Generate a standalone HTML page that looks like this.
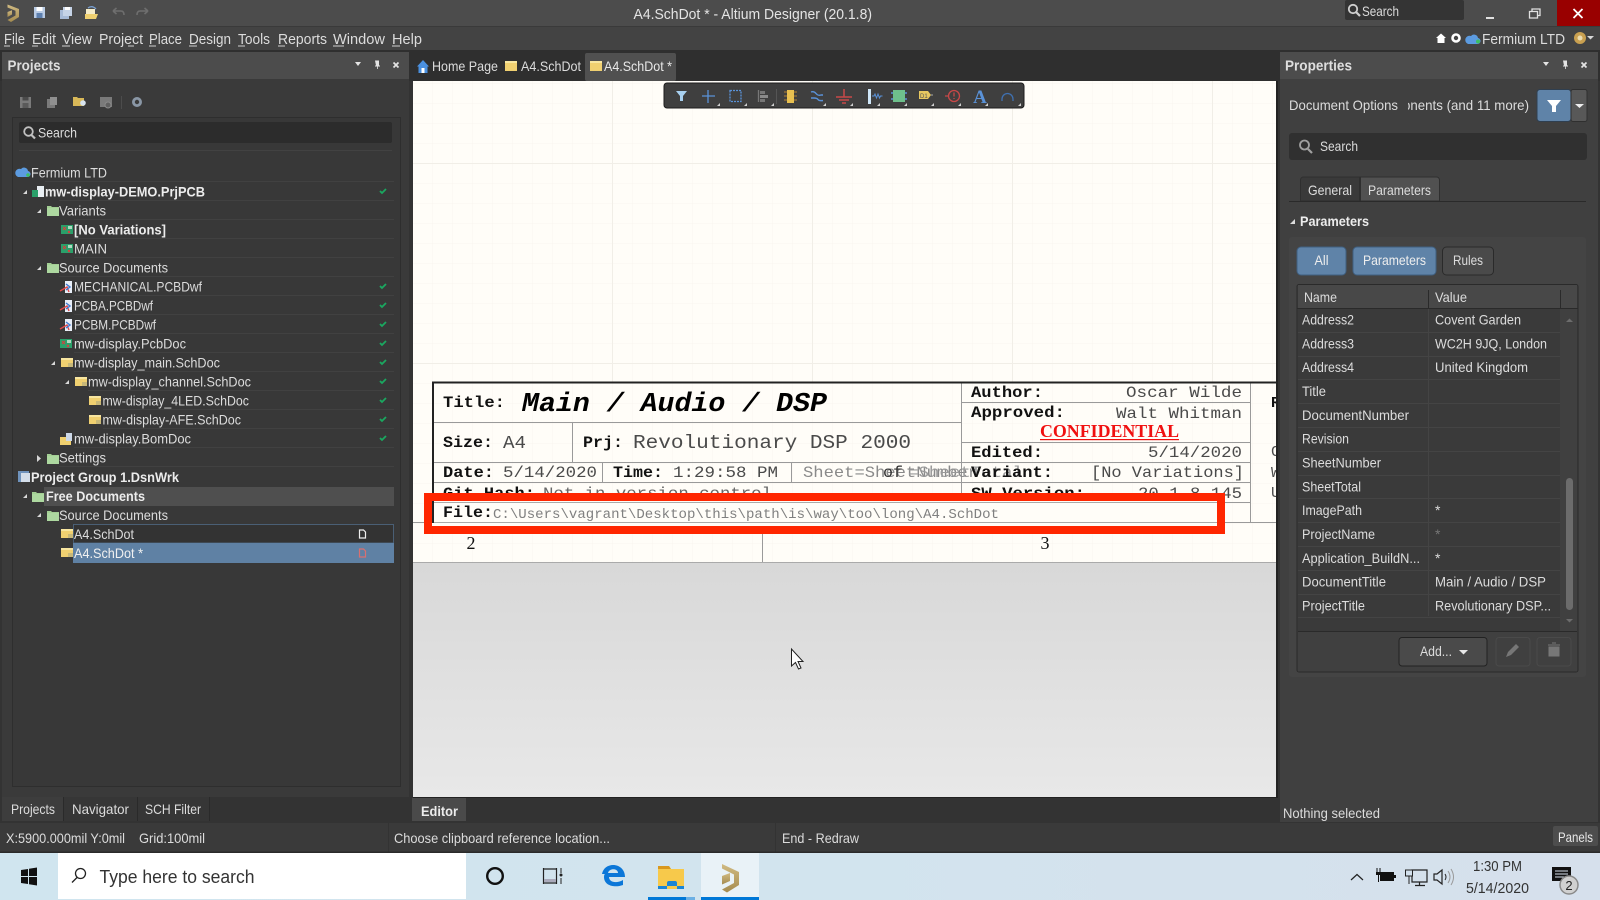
<!DOCTYPE html>
<html><head><meta charset="utf-8"><title>A4.SchDot</title>
<style>
html,body{margin:0;padding:0;background:#333;width:1600px;height:900px;overflow:hidden}
svg{display:block}
text{font-family:"Liberation Sans",sans-serif;font-size:14px;fill:#dcdcdc;white-space:pre}
.b{font-weight:bold;fill:#ececec}
.m{font-family:"Liberation Mono",monospace;fill:#4a4a4a}
.mb{font-family:"Liberation Mono",monospace;font-weight:bold;fill:#111}
</style></head><body>
<svg xmlns="http://www.w3.org/2000/svg" width="1600" height="900" viewBox="0 0 1600 900">
<defs>
<linearGradient id="cg" x1="0" y1="0" x2="0" y2="1"><stop offset="0" stop-color="#d8d8d8"/><stop offset="1" stop-color="#e8e8e8"/></linearGradient>
<linearGradient id="tb" x1="0" y1="0" x2="1" y2="0"><stop offset="0" stop-color="#d0e5ef"/><stop offset="0.5" stop-color="#d2e4ee"/><stop offset="1" stop-color="#d6e0ec"/></linearGradient>
<linearGradient id="gold" x1="0" y1="0" x2="0" y2="1"><stop offset="0" stop-color="#d0ba82"/><stop offset="1" stop-color="#a58c50"/></linearGradient>
<pattern id="grid" width="20" height="20" patternUnits="userSpaceOnUse" x="412" y="103"><path d="M20 0H0V20" fill="none" stroke="#f8f5ef" stroke-width="1"/></pattern>
<g id="fold"><path d="M0 1h4l1 1h7v9H0z" fill="#a3cf94"/><path d="M0 3h12v8H0z" fill="#add8a0"/></g>
<g id="sch"><rect x="0" y="0" width="12" height="9" fill="#f0d070"/><rect x="0" y="0" width="12" height="2" fill="#f8e6a0"/><rect x="7" y="5" width="5" height="4" fill="#c8b878"/></g>
<g id="pcb"><rect x="0" y="0" width="12" height="9" fill="#2aa06a"/><rect x="7" y="1" width="4" height="3" fill="#b0d8c0"/><path d="M2 2l3 3M5 2l-3 3M7 6l2 2M9 6l-2 2" stroke="#d84040" stroke-width="1"/></g>
<g id="dwf"><path d="M5 0h7v12H5z" fill="#e8eef8"/><path d="M0 10l7-4 2 5" fill="none" stroke="#e04848" stroke-width="1.400"/><path d="M6 3l4 3-4 3" fill="none" stroke="#3f78d0" stroke-width="1.400"/></g>
<path id="ck" d="M0 3l2 2 4-4" fill="none" stroke="#1aa860" stroke-width="1.800"/>
<path id="tri" d="M0 4L4 0V4z" fill="#d8d8d8"/>
<g id="corner"><path d="M0 3L3 0V3z" fill="#cfcfcf"/></g>
</defs>

<!-- chrome background -->
<rect width="1600" height="900" fill="#333"/>
<rect width="1600" height="26" fill="#4c4c4c"/>
<rect y="26" width="1600" height="1" fill="#3a3a3a"/>
<rect y="27" width="1600" height="23" fill="#434343"/>
<rect y="50" width="1600" height="31" fill="#2f2f2f"/>

<!-- title bar -->
<path d="M7.500 4.500L19 9V17L11 22L7.500 20L15.500 15.500V10.800L7.500 7.500z" fill="url(#gold)"/><path d="M7.500 12L12 10.300V14.500L7.500 17z" fill="url(#gold)"/>
<g><rect x="34" y="7" width="11" height="11" fill="#b9cbe4"/><rect x="36.500" y="7" width="6" height="4" fill="#fff"/><rect x="36.500" y="13" width="6" height="5" fill="#5d7fae"/></g>
<g><rect x="60" y="10" width="9" height="9" fill="#a7bbd8"/><rect x="63" y="7" width="9" height="9" fill="#c6d4e8"/><rect x="65" y="7" width="5" height="3" fill="#fff"/></g>
<g><path d="M85 14h13l-2 5H85z" fill="#efd070"/><path d="M86 9h9v5h-9z" fill="#f5ecc8"/><path d="M88 8q4-3 8 1" fill="none" stroke="#7aa0d0" stroke-width="1.300"/></g>
<path d="M113 11h8q3 0 3 4M113 11l3.500-3M113 11l3.500 3" fill="none" stroke="#6e6e6e" stroke-width="1.600"/>
<path d="M148 11h-8q-3 0-3 4M148 11l-3.500-3M148 11l-3.500 3" fill="none" stroke="#6e6e6e" stroke-width="1.600"/>
<text x="633.500" y="19" textLength="238.500" lengthAdjust="spacingAndGlyphs" style="font-size:15px;fill:#e4e4e4">A4.SchDot * - Altium Designer (20.1.8)</text>
<rect x="1345" y="0" width="119" height="20" rx="2" fill="#343434"/>
<circle cx="1353" cy="9" r="4.200" fill="none" stroke="#cfcfcf" stroke-width="1.800"/><path d="M1356 12l4 4" stroke="#cfcfcf" stroke-width="2.200"/>
<text x="1362" y="16" textLength="37" lengthAdjust="spacingAndGlyphs">Search</text>
<rect x="1486" y="17" width="8" height="2" fill="#e0e0e0"/>
<path d="M1529.500 11.500h8v6.500h-8zM1532 11.500V9h8v6.500h-2.500" fill="none" stroke="#e0e0e0" stroke-width="1.300"/>
<rect x="1557" y="0" width="43" height="26" fill="#990000"/>
<path d="M1573.500 9l9 9M1582.500 9l-9 9" stroke="#fff" stroke-width="1.800"/>

<!-- menu -->
<text x="4" y="44" textLength="21" lengthAdjust="spacingAndGlyphs" style="font-size:15px">File</text>
<text x="32" y="44" textLength="24" lengthAdjust="spacingAndGlyphs" style="font-size:15px">Edit</text>
<text x="62" y="44" textLength="30" lengthAdjust="spacingAndGlyphs" style="font-size:15px">View</text>
<text x="99" y="44" textLength="44" lengthAdjust="spacingAndGlyphs" style="font-size:15px">Project</text>
<text x="149" y="44" textLength="33" lengthAdjust="spacingAndGlyphs" style="font-size:15px">Place</text>
<text x="189" y="44" textLength="42" lengthAdjust="spacingAndGlyphs" style="font-size:15px">Design</text>
<text x="238" y="44" textLength="32" lengthAdjust="spacingAndGlyphs" style="font-size:15px">Tools</text>
<text x="278" y="44" textLength="49" lengthAdjust="spacingAndGlyphs" style="font-size:15px">Reports</text>
<text x="333" y="44" textLength="52" lengthAdjust="spacingAndGlyphs" style="font-size:15px">Window</text>
<text x="392" y="44" textLength="30" lengthAdjust="spacingAndGlyphs" style="font-size:15px">Help</text>
<path d="M4 46h6M32 46h6M62 46h8M128 46h6M149 46h7M189 46h8M238 46h7M278 46h7M333 46h11M392 46h8" stroke="#cfcfcf" stroke-width="1"/>
<path d="M1436 38l5-4.500 5 4.500h-1.500v5h-7v-5z" fill="#fff"/>
<circle cx="1456" cy="38" r="3.500" fill="none" stroke="#fff" stroke-width="2.600"/>
<path d="M1468 44h9a3 3 0 0 0 1-6 4 4 0 0 0-7-2 4 4 0 0 0-3 8z" fill="#5c9be0"/><circle cx="1478" cy="41.500" r="2" fill="#3cc060"/>
<text x="1482" y="44" textLength="83" lengthAdjust="spacingAndGlyphs" style="font-size:15px">Fermium LTD</text>
<circle cx="1580" cy="38" r="6" fill="#c9a050"/><circle cx="1580" cy="38" r="2.500" fill="#ecdcb0"/>
<path d="M1587 36h7l-3.500 3.500z" fill="#d8d8d8"/>

<!-- left panel -->
<rect x="2" y="52" width="407" height="745" fill="#3a3a3a"/>
<rect x="2" y="52" width="407" height="27" fill="#4c4c4c"/>
<text class="b" x="7.500" y="70.500" textLength="53" lengthAdjust="spacingAndGlyphs" style="font-size:14.500px;fill:#dedede">Projects</text>
<path d="M355 62h6l-3 4z" fill="#e4e4e4"/>
<path d="M375 60.500h4v5h1v1h-2v2.500h-.8v-2.500H375v-1h1z" fill="#e4e4e4"/>
<path d="M393.500 62.500l5 5M398.500 62.500l-5 5" stroke="#e4e4e4" stroke-width="1.700"/>
<g fill="#7a7a7a"><rect x="20" y="97" width="11" height="11"/><rect x="47" y="99" width="8" height="9"/><rect x="50" y="97" width="7" height="8" fill="#909090"/><rect x="100" y="97" width="12" height="10"/></g>
<rect x="22.500" y="97" width="6" height="3.500" fill="#4a4a4a"/><rect x="22.500" y="103" width="6" height="5" fill="#5a5a5a"/>
<path d="M73 97h4l1 1h6v8H73z" fill="#d8b858"/><circle cx="83" cy="103" r="2.800" fill="#d8e4f0"/>
<circle cx="108" cy="105" r="3" fill="#606060" stroke="#8a8a8a"/>
<rect x="121" y="96" width="1" height="13" fill="#4c4c4c"/>
<circle cx="137" cy="102" r="3.600" fill="none" stroke="#8a97a6" stroke-width="2.800"/>
<rect x="12.500" y="117.500" width="388" height="669" fill="#383838" stroke="#2e2e2e"/>
<rect x="19" y="122" width="373" height="21" rx="2" fill="#2c2c2c"/>
<circle cx="28.500" cy="131.500" r="4.300" fill="none" stroke="#c0c0c0" stroke-width="1.800"/><path d="M31.500 135l3.500 3.500" stroke="#c0c0c0" stroke-width="2.200"/>
<text x="38" y="137.500" textLength="39" lengthAdjust="spacingAndGlyphs">Search</text>
<rect x="19" y="150" width="373" height="1" fill="#424242"/>

<!-- row separators -->
<path d="M45 181.500H394M59 200.500H394M74 219.500H394M74 238.500H394M74 257.500H394M59 276.500H394M74 295.500H394M74 314.500H394M74 333.500H394M74 352.500H394M74 371.500H394M88 390.500H394M103 409.500H394M103 428.500H394M74 447.500H394M59 466.500H394" stroke="#414141" stroke-width="1" fill="none"/>

<rect x="44" y="487" width="350" height="19" fill="#4f4f4f"/>
<rect x="73.500" y="524.500" width="320" height="18.500" fill="#333" stroke="#4a5f75"/>
<rect x="73" y="543" width="321" height="20" fill="#5f81a4"/>

<!-- tree icons -->
<path d="M18 177h9a3 3 0 0 0 1-6 4 4 0 0 0-7-2 4 4 0 0 0-3 8z" fill="#5c9be0"/><circle cx="28" cy="175" r="1.800" fill="#3cc060"/>
<use href="#tri" x="23" y="190"/>
<rect x="37" y="186" width="7" height="11" fill="#e8eef2"/><rect x="32" y="190" width="6" height="7" fill="#2aa06a"/>
<use href="#tri" x="37" y="209"/><use href="#fold" x="47" y="205"/>
<use href="#pcb" x="61" y="225"/><use href="#pcb" x="61" y="244"/>
<use href="#tri" x="37" y="266"/><use href="#fold" x="47" y="262"/>
<use href="#dwf" x="60" y="281"/><use href="#dwf" x="60" y="300"/><use href="#dwf" x="60" y="319"/>
<use href="#pcb" x="60" y="339"/>
<use href="#tri" x="51" y="361"/><use href="#sch" x="61" y="358"/>
<use href="#tri" x="65" y="380"/><use href="#sch" x="75" y="377"/>
<use href="#sch" x="89" y="396"/><use href="#sch" x="89" y="415"/>
<rect x="60" y="437" width="11" height="8" fill="#f0d070"/><rect x="66" y="433" width="6" height="8" fill="#ccd8e8"/>
<path d="M37 455l4 3.500-4 3.500z" fill="#d8d8d8"/><use href="#fold" x="47" y="453"/>
<rect x="18" y="471" width="11" height="11" fill="#6f93bd"/><rect x="21" y="473" width="9" height="9" fill="#d4deea"/>
<use href="#tri" x="23" y="494"/><use href="#fold" x="32" y="491"/>
<use href="#tri" x="37" y="513"/><use href="#fold" x="47" y="510"/>
<use href="#sch" x="61" y="529"/><use href="#sch" x="61" y="548"/>
<path d="M359.500 530h4l2 2v6h-6z" fill="none" stroke="#eee" stroke-width="1.200"/>
<path d="M359.500 549h4l2 2v6h-6z" fill="none" stroke="#d87070" stroke-width="1.200"/>
<use href="#ck" x="380" y="188"/><use href="#ck" x="380" y="283"/><use href="#ck" x="380" y="302"/><use href="#ck" x="380" y="321"/><use href="#ck" x="380" y="340"/><use href="#ck" x="380" y="359"/><use href="#ck" x="380" y="378"/><use href="#ck" x="380" y="397"/><use href="#ck" x="380" y="416"/><use href="#ck" x="380" y="435"/>

<!-- tree text -->
<text x="31" y="177.500" textLength="76" lengthAdjust="spacingAndGlyphs">Fermium LTD</text>
<text class="b" x="45" y="196.500" textLength="160" lengthAdjust="spacingAndGlyphs">mw-display-DEMO.PrjPCB</text>
<text x="59" y="215.500" textLength="47" lengthAdjust="spacingAndGlyphs">Variants</text>
<text class="b" x="74" y="234.500" textLength="92" lengthAdjust="spacingAndGlyphs">[No Variations]</text>
<text x="74" y="253.500" textLength="33" lengthAdjust="spacingAndGlyphs">MAIN</text>
<text x="59" y="272.500" textLength="109" lengthAdjust="spacingAndGlyphs">Source Documents</text>
<text x="74" y="291.500" textLength="128" lengthAdjust="spacingAndGlyphs">MECHANICAL.PCBDwf</text>
<text x="74" y="310.500" textLength="79" lengthAdjust="spacingAndGlyphs">PCBA.PCBDwf</text>
<text x="74" y="329.500" textLength="82" lengthAdjust="spacingAndGlyphs">PCBM.PCBDwf</text>
<text x="74" y="348.500" textLength="112" lengthAdjust="spacingAndGlyphs">mw-display.PcbDoc</text>
<text x="74" y="367.500" textLength="146" lengthAdjust="spacingAndGlyphs">mw-display_main.SchDoc</text>
<text x="88" y="386.500" textLength="163" lengthAdjust="spacingAndGlyphs">mw-display_channel.SchDoc</text>
<text x="102.500" y="405.500" textLength="146.500" lengthAdjust="spacingAndGlyphs">mw-display_4LED.SchDoc</text>
<text x="102.500" y="424.500" textLength="138.500" lengthAdjust="spacingAndGlyphs">mw-display-AFE.SchDoc</text>
<text x="74" y="443.500" textLength="117" lengthAdjust="spacingAndGlyphs">mw-display.BomDoc</text>
<text x="59" y="462.500" textLength="47" lengthAdjust="spacingAndGlyphs">Settings</text>
<text class="b" x="31" y="482" textLength="148" lengthAdjust="spacingAndGlyphs">Project Group 1.DsnWrk</text>
<text class="b" x="46" y="501" textLength="99" lengthAdjust="spacingAndGlyphs">Free Documents</text>
<text x="59" y="520" textLength="109" lengthAdjust="spacingAndGlyphs">Source Documents</text>
<text x="74" y="539" textLength="60" lengthAdjust="spacingAndGlyphs">A4.SchDot</text>
<text x="74" y="558" textLength="69" lengthAdjust="spacingAndGlyphs" style="fill:#f0f0f0">A4.SchDot *</text>

<!-- panel tabs -->
<rect x="2" y="797" width="61" height="24" fill="#3d3d3d"/>
<rect x="63" y="797" width="74" height="24" fill="#363636"/>
<rect x="137" y="797" width="72" height="24" fill="#363636"/>
<path d="M63.500 797v24M137.500 797v24M209.500 797v24" stroke="#2a2a2a"/>
<text x="11" y="814" textLength="44" lengthAdjust="spacingAndGlyphs">Projects</text>
<text x="72" y="814" textLength="57" lengthAdjust="spacingAndGlyphs">Navigator</text>
<text x="145" y="814" textLength="56" lengthAdjust="spacingAndGlyphs">SCH Filter</text>

<!-- document tabs -->
<path d="M417 66.500l6-6.500 6 6.500h-1.500v6.500h-9v-6.500z" fill="#4a90e0"/><rect x="421.500" y="68" width="3" height="5" fill="#fff"/>
<text x="432" y="71" textLength="66" lengthAdjust="spacingAndGlyphs">Home Page</text>
<rect x="505" y="61" width="12" height="10" fill="#f0d070"/><rect x="505" y="61" width="12" height="2" fill="#f8e6a0"/>
<text x="521" y="71" textLength="60" lengthAdjust="spacingAndGlyphs">A4.SchDot</text>
<rect x="585" y="53" width="91" height="28" rx="2" fill="#505050"/>
<rect x="590" y="61" width="12" height="10" fill="#f0d070"/><rect x="590" y="61" width="12" height="2" fill="#f8e6a0"/>
<text x="604" y="71" textLength="68" lengthAdjust="spacingAndGlyphs" style="fill:#e8e8e8">A4.SchDot *</text>

<!-- canvas -->
<clipPath id="cv"><rect x="413" y="81" width="863" height="716"/></clipPath>
<g clip-path="url(#cv)">
<rect x="412" y="81" width="864" height="482" fill="#fffdf8"/>
<rect x="412" y="81" width="864" height="482" fill="url(#grid)"/>
<path d="M612.500 81V382M812.500 81V382M1012.500 81V382M1212.500 81V382M412 163.500H1276M412 363.500H1276" stroke="#f1eee7" stroke-width="1" fill="none"/>
<rect x="412" y="563" width="864" height="234" fill="url(#cg)"/>
<rect x="412" y="562" width="864" height="1" fill="#aaa"/>

<!-- title block lines -->
<path d="M433 422.500H962M433 462.500H1250M433 482.500H1250M962 402.500H1250M962 442.500H1250M962 502.500H1250M412 522.500H1276M572.500 422V462M602.500 462V482M791.500 462V482M961.500 382V522M1250.500 382V522M762.500 522V562" stroke="#9a9a9a" stroke-width="1" fill="none"/>
<rect x="432" y="381.500" width="844" height="2" fill="#222"/>
<rect x="432" y="381.500" width="2" height="141" fill="#222"/>

<text class="mb" x="443" y="407" textLength="62" lengthAdjust="spacingAndGlyphs" style="font-size:16px">Title:</text>
<text class="mb" x="522" y="411" textLength="305" lengthAdjust="spacingAndGlyphs" style="font-size:27px;font-style:italic;fill:#000">Main / Audio / DSP</text>
<text class="mb" x="443" y="447" textLength="50" lengthAdjust="spacingAndGlyphs" style="font-size:16px">Size:</text>
<text class="m" x="503" y="448" textLength="23" lengthAdjust="spacingAndGlyphs" style="font-size:18px">A4</text>
<text class="mb" x="583" y="447" textLength="40" lengthAdjust="spacingAndGlyphs" style="font-size:16px">Prj:</text>
<text class="m" x="633" y="448" textLength="278" lengthAdjust="spacingAndGlyphs" style="font-size:19px">Revolutionary DSP 2000</text>
<text class="mb" x="443" y="477" textLength="51" lengthAdjust="spacingAndGlyphs" style="font-size:16px">Date:</text>
<text class="m" x="503" y="477" textLength="94" lengthAdjust="spacingAndGlyphs" style="font-size:16px">5/14/2020</text>
<text class="mb" x="613" y="477" textLength="50" lengthAdjust="spacingAndGlyphs" style="font-size:16px">Time:</text>
<text class="m" x="673" y="477" textLength="105" lengthAdjust="spacingAndGlyphs" style="font-size:16px">1:29:58 PM</text>
<text class="m" x="803" y="477" textLength="175" lengthAdjust="spacingAndGlyphs" style="font-size:16px;fill:#8a8a8a">Sheet=SheetNumber</text>
<text class="mb" x="883" y="477" textLength="20" lengthAdjust="spacingAndGlyphs" style="font-size:16px;font-weight:normal;fill:#333">of</text>
<text class="m" x="908" y="477" textLength="115" lengthAdjust="spacingAndGlyphs" style="font-size:16px;fill:#9a9a9a">=SheetTotal</text>
<text class="mb" x="443" y="498" textLength="92" lengthAdjust="spacingAndGlyphs" style="font-size:16px">Git Hash:</text>
<text class="m" x="543" y="498" textLength="229" lengthAdjust="spacingAndGlyphs" style="font-size:16px;fill:#666">Not in version control</text>

<text class="mb" x="971" y="397" textLength="72" lengthAdjust="spacingAndGlyphs" style="font-size:16px">Author:</text>
<text class="m" x="1126" y="397" textLength="116" lengthAdjust="spacingAndGlyphs" style="font-size:16px">Oscar Wilde</text>
<text class="mb" x="971" y="417" textLength="94" lengthAdjust="spacingAndGlyphs" style="font-size:16px">Approved:</text>
<text class="m" x="1116" y="418" textLength="126" lengthAdjust="spacingAndGlyphs" style="font-size:16px">Walt Whitman</text>
<text x="1040" y="437" textLength="139" lengthAdjust="spacingAndGlyphs" style="font-family:'Liberation Serif',serif;font-weight:bold;font-size:18px;fill:#f01010">CONFIDENTIAL</text>
<rect x="1040" y="439" width="139" height="1.200" fill="#f01010"/>
<text class="mb" x="971" y="457" textLength="72" lengthAdjust="spacingAndGlyphs" style="font-size:16px">Edited:</text>
<text class="m" x="1148" y="457" textLength="94" lengthAdjust="spacingAndGlyphs" style="font-size:16px">5/14/2020</text>
<text class="mb" x="971" y="477" textLength="82" lengthAdjust="spacingAndGlyphs" style="font-size:16px">Variant:</text>
<text class="m" x="1091" y="477" textLength="153" lengthAdjust="spacingAndGlyphs" style="font-size:16px">[No Variations]</text>
<text class="mb" x="971" y="498" textLength="114" lengthAdjust="spacingAndGlyphs" style="font-size:16px">SW Version:</text>
<text class="m" x="1138" y="498" textLength="104" lengthAdjust="spacingAndGlyphs" style="font-size:16px">20.1.8.145</text>
<text class="mb" x="1271" y="407" style="font-size:15px">R</text>
<text class="m" x="1271" y="456" style="font-size:15px">C</text>
<text class="m" x="1271" y="477" style="font-size:15px">W</text>
<text class="m" x="1271" y="497" style="font-size:15px">U</text>

<!-- red highlight -->
<rect x="428" y="497" width="793" height="33" fill="#fffdf8" stroke="#ff2600" stroke-width="8"/>
<rect x="432" y="502" width="785" height="1" fill="#aaa"/>
<rect x="432" y="522" width="785" height="1" fill="#aaa"/>
<rect x="432" y="501" width="2" height="22" fill="#222"/>
<text class="mb" x="443" y="517" textLength="50" lengthAdjust="spacingAndGlyphs" style="font-size:16px">File:</text>
<text class="m" x="493" y="518" textLength="506" lengthAdjust="spacingAndGlyphs" style="font-size:13.500px;fill:#808080">C:\Users\vagrant\Desktop\this\path\is\way\too\long\A4.SchDot</text>

<text x="471" y="549" text-anchor="middle" style="font-family:'Liberation Serif',serif;font-size:18px;fill:#111">2</text>
<text x="1045" y="549" text-anchor="middle" style="font-family:'Liberation Serif',serif;font-size:18px;fill:#111">3</text>

<!-- mouse cursor -->
<path d="M791.500 649V666l4-3.500 3 6.500 2.500-1-3-6.500h5z" fill="#fff" stroke="#222" stroke-width="1"/>

<!-- floating toolbar -->
<rect x="664" y="83" width="360" height="25" rx="3" fill="#3f3f3f" stroke="#1c1c1c"/>
<path d="M676 91h11l-4 5v5h-3v-5z" fill="#a8d0f0"/>
<path d="M708 90v13M702 96h13" stroke="#5a92d8" stroke-width="1.300"/>
<rect x="730" y="90.500" width="11" height="11" fill="none" stroke="#5a92d8" stroke-width="1.300" stroke-dasharray="2 1"/>
<path d="M758.500 90v12" stroke="#777" stroke-width="1.300"/><rect x="760" y="91" width="5" height="3" fill="#777"/><rect x="760" y="95" width="8" height="3" fill="#8a8a8a"/><rect x="760" y="99" width="5" height="3" fill="#777"/>
<rect x="776" y="89" width="1" height="15" fill="#555"/>
<rect x="787" y="90" width="7" height="13" fill="#e8c050"/><path d="M784 92h3M784 96h3M784 100h3M794 92h3M794 96h3M794 100h3" stroke="#b08030"/>
<path d="M811 92q3-1 5 1.500t5 1.500h2M811 98h3q3 0 4 1.500t5 1" fill="none" stroke="#5a92d8" stroke-width="1.400"/>
<path d="M844 89v8M836 97h16M839 100h10M842 103h4" stroke="#c84848" stroke-width="1.500"/>
<rect x="868" y="89" width="3" height="15" fill="#cfe6f8"/><path d="M872 96h2l1-2 1.500 4 1.500-4 1.500 4 1-2h2" fill="none" stroke="#5a92d8"/>
<rect x="893" y="90" width="12" height="12" fill="#6ec08c"/><path d="M891 93h2M891 99h2M905 93h2M905 99h2" stroke="#5a92d8" stroke-width="1.500"/>
<path d="M919 91h9l3 4-3 4h-9z" fill="#e8c860"/><text x="920" y="98" style="font-size:6px;fill:#555">D1</text><path d="M931 95h2" stroke="#aaa"/>
<circle cx="954" cy="96" r="5.500" fill="none" stroke="#c84848" stroke-width="1.300"/><path d="M954 92.500v4M954 98v1M945 96h3.500" stroke="#c84848" stroke-width="1.300"/>
<text x="980" y="103" text-anchor="middle" style="font-family:'Liberation Serif',serif;font-weight:bold;font-size:19px;fill:#5a92d8">A</text>
<path d="M1002 101v-2a5.500 5.500 0 0 1 11 0v2" fill="none" stroke="#3f70b0" stroke-width="1.300"/>
<use href="#corner" x="717" y="103"/><use href="#corner" x="744" y="103"/><use href="#corner" x="771" y="103"/><use href="#corner" x="823" y="103"/><use href="#corner" x="850" y="103"/><use href="#corner" x="877" y="103"/><use href="#corner" x="904" y="103"/><use href="#corner" x="931" y="103"/><use href="#corner" x="958" y="103"/><use href="#corner" x="985" y="103"/><use href="#corner" x="1018" y="103"/>
</g>
<rect x="1276" y="81" width="2" height="716" fill="#222"/>
<rect x="413" y="797" width="865" height="1" fill="#222"/>

<!-- editor tab -->
<rect x="412" y="798" width="54" height="23" fill="#4a4a4a"/>
<text class="b" x="421" y="816" textLength="37" lengthAdjust="spacingAndGlyphs">Editor</text>

<!-- right panel -->
<rect x="1280" y="52" width="318" height="770" fill="#404040"/>
<rect x="1280" y="52" width="318" height="27" fill="#4c4c4c"/>
<text class="b" x="1285" y="70.500" textLength="67" lengthAdjust="spacingAndGlyphs" style="font-size:14.500px;fill:#dedede">Properties</text>
<path d="M1543 62h6l-3 4z" fill="#e4e4e4"/>
<path d="M1563 60.500h4v5h1v1h-2v2.500h-.8v-2.500H1563v-1h1z" fill="#e4e4e4"/>
<path d="M1581.500 62.500l5 5M1586.500 62.500l-5 5" stroke="#e4e4e4" stroke-width="1.700"/>
<text x="1289" y="110" textLength="109" lengthAdjust="spacingAndGlyphs">Document Options</text>
<clipPath id="cp"><rect x="1408" y="95" width="125" height="25"/></clipPath>
<g clip-path="url(#cp)"><text x="1403" y="110" textLength="126" lengthAdjust="spacingAndGlyphs">onents (and 11 more)</text></g>
<rect x="1537" y="89.500" width="34" height="32" rx="3" fill="#5f83a8" stroke="#2f3f50"/>
<rect x="1571" y="89.500" width="16" height="32" rx="2" fill="#585858" stroke="#2f2f2f"/>
<path d="M1547 100h14l-5 6v6h-4v-6z" fill="#fff"/>
<path d="M1575 104h9l-4.500 4z" fill="#eee"/>
<rect x="1289" y="133" width="298" height="27" rx="3" fill="#303030"/>
<circle cx="1304.500" cy="145" r="4.500" fill="none" stroke="#a0a0a0" stroke-width="1.800"/><path d="M1308 149l4 4" stroke="#a0a0a0" stroke-width="2.200"/>
<text x="1320" y="151" textLength="38" lengthAdjust="spacingAndGlyphs">Search</text>
<path d="M1300.500 201v-21a3 3 0 0 1 3-3h56v24z" fill="#3a3a3a" stroke="#2f2f2f"/>
<path d="M1360.500 201v-24h76a3 3 0 0 1 3 3v21z" fill="#515151" stroke="#2f2f2f"/>
<text x="1308" y="195" textLength="44" lengthAdjust="spacingAndGlyphs">General</text>
<text x="1368" y="195" textLength="63" lengthAdjust="spacingAndGlyphs">Parameters</text>
<rect x="1289" y="201" width="297" height="1" fill="#2a2a2a"/>
<path d="M1290 224l5-5v5z" fill="#ddd"/>
<text class="b" x="1300" y="226" textLength="69" lengthAdjust="spacingAndGlyphs">Parameters</text>
<rect x="1289" y="237" width="297" height="440" rx="3" fill="#444"/>
<rect x="1297" y="247" width="49" height="28" rx="4" fill="#5f83a8" stroke="#3f5f80"/>
<text x="1314.500" y="265" textLength="14" lengthAdjust="spacingAndGlyphs" style="fill:#eee">All</text>
<rect x="1353" y="247" width="83" height="28" rx="4" fill="#5f83a8" stroke="#3f5f80"/>
<text x="1363" y="265" textLength="63" lengthAdjust="spacingAndGlyphs" style="fill:#eee">Parameters</text>
<rect x="1442.500" y="247" width="51" height="28" rx="4" fill="#4a4a4a" stroke="#2a2a2a"/>
<text x="1453" y="265" textLength="30" lengthAdjust="spacingAndGlyphs">Rules</text>

<!-- table -->
<rect x="1297" y="284.500" width="281" height="387.500" rx="2" fill="#3e3e3e" stroke="#2a2a2a"/>
<rect x="1298" y="285" width="279" height="23" fill="#484848"/>
<rect x="1297" y="308" width="281" height="1" fill="#2a2a2a"/>
<rect x="1298" y="309" width="262" height="322" fill="#3a3a3a"/>
<rect x="1560" y="309" width="17" height="322" fill="#404040"/>
<path d="M1428.500 290v19M1560.500 290v19" stroke="#2a2a2a"/>
<path d="M1428.500 309V616" stroke="#444"/>
<path d="M1298 332.500H1560M1298 356.500H1560M1298 379.500H1560M1298 403.500H1560M1298 427.500H1560M1298 451.500H1560M1298 475.500H1560M1298 498.500H1560M1298 522.500H1560M1298 546.500H1560M1298 570.500H1560M1298 594.500H1560M1298 617.500H1560" stroke="#444"/>
<text x="1304" y="302" textLength="33" lengthAdjust="spacingAndGlyphs">Name</text>
<text x="1435" y="302" textLength="32" lengthAdjust="spacingAndGlyphs">Value</text>
<text x="1302" y="324.500" textLength="52" lengthAdjust="spacingAndGlyphs">Address2</text>
<text x="1435" y="324.500" textLength="86" lengthAdjust="spacingAndGlyphs">Covent Garden</text>
<text x="1302" y="348.500" textLength="52" lengthAdjust="spacingAndGlyphs">Address3</text>
<text x="1435" y="348.500" textLength="112" lengthAdjust="spacingAndGlyphs">WC2H 9JQ, London</text>
<text x="1302" y="372" textLength="52" lengthAdjust="spacingAndGlyphs">Address4</text>
<text x="1435" y="372" textLength="93" lengthAdjust="spacingAndGlyphs">United Kingdom</text>
<text x="1302" y="396" textLength="24" lengthAdjust="spacingAndGlyphs">Title</text>
<text x="1302" y="420" textLength="107" lengthAdjust="spacingAndGlyphs">DocumentNumber</text>
<text x="1302" y="443.500" textLength="47" lengthAdjust="spacingAndGlyphs">Revision</text>
<text x="1302" y="467.500" textLength="79" lengthAdjust="spacingAndGlyphs">SheetNumber</text>
<text x="1302" y="491.500" textLength="59" lengthAdjust="spacingAndGlyphs">SheetTotal</text>
<text x="1302" y="515" textLength="60" lengthAdjust="spacingAndGlyphs">ImagePath</text>
<text x="1435" y="515">*</text>
<text x="1302" y="539" textLength="73" lengthAdjust="spacingAndGlyphs">ProjectName</text>
<text x="1435" y="539" style="fill:#777">*</text>
<text x="1302" y="563" textLength="118" lengthAdjust="spacingAndGlyphs">Application_BuildN...</text>
<text x="1435" y="563">*</text>
<text x="1302" y="586.500" textLength="84" lengthAdjust="spacingAndGlyphs">DocumentTitle</text>
<text x="1435" y="586.500" textLength="111" lengthAdjust="spacingAndGlyphs">Main / Audio / DSP</text>
<text x="1302" y="610.500" textLength="63" lengthAdjust="spacingAndGlyphs">ProjectTitle</text>
<text x="1435" y="610.500" textLength="116" lengthAdjust="spacingAndGlyphs">Revolutionary DSP...</text>
<rect x="1566" y="478" width="7" height="132" rx="3.500" fill="#6c6c6c"/>
<path d="M1566 322h7l-3.500-3.500z" fill="#6c6c6c"/><path d="M1566 619h7l-3.500 3.500z" fill="#6c6c6c"/>
<rect x="1298" y="631" width="279" height="1" fill="#2a2a2a"/>
<rect x="1298" y="632" width="279" height="39.500" fill="#404040"/>
<rect x="1399" y="637.500" width="88" height="28.500" rx="3" fill="#4a4a4a" stroke="#222"/>
<text x="1420" y="656" textLength="32" lengthAdjust="spacingAndGlyphs">Add...</text>
<path d="M1459 650h9l-4.500 4.500z" fill="#e8e8e8"/>
<rect x="1496" y="637.500" width="34" height="28.500" rx="3" fill="#404040" stroke="#4a4a4a"/>
<path d="M1506 657l2-5 8-8 3 3-8 8z" fill="#777"/>
<rect x="1537" y="637.500" width="34" height="28.500" rx="3" fill="#404040" stroke="#4a4a4a"/>
<path d="M1549 647h10v9h-10zM1548 645h12M1552 643h4" fill="#777" stroke="#777"/>
<text x="1283" y="818" textLength="97" lengthAdjust="spacingAndGlyphs">Nothing selected</text>

<!-- status bar -->
<rect y="823" width="1600" height="29" fill="#3a3a3a"/>
<path d="M388.500 823v29M775.500 823v29" stroke="#333"/>
<text x="6" y="843" textLength="119" lengthAdjust="spacingAndGlyphs">X:5900.000mil Y:0mil</text>
<text x="139" y="843" textLength="66" lengthAdjust="spacingAndGlyphs">Grid:100mil</text>
<text x="394" y="843" textLength="216" lengthAdjust="spacingAndGlyphs">Choose clipboard reference location...</text>
<text x="782" y="843" textLength="77" lengthAdjust="spacingAndGlyphs">End - Redraw</text>
<rect x="1553" y="826" width="45" height="20" rx="2" fill="#4d4d4d"/>
<text x="1558" y="842" textLength="35" lengthAdjust="spacingAndGlyphs" style="fill:#e8e8e8">Panels</text>

<!-- taskbar -->
<rect y="852" width="1600" height="48" fill="url(#tb)"/>
<rect y="851.500" width="1600" height="1.500" fill="#2a2a2a"/>
<path d="M21 870l7-1v7h-7zM29 868.800l8-1.300v8.500h-8zM21 877h7v7l-7-1zM29 877h8v8.500l-8-1.300z" fill="#111"/>
<rect x="58" y="853" width="408" height="46" fill="#fff"/>
<circle cx="80.500" cy="873.500" r="5" fill="none" stroke="#222" stroke-width="1.300"/><path d="M77 877.500l-5 5" stroke="#222" stroke-width="1.300"/>
<text x="99.500" y="883" textLength="155" lengthAdjust="spacingAndGlyphs" style="font-size:18px;fill:#333">Type here to search</text>
<circle cx="495" cy="876" r="7.800" fill="none" stroke="#111" stroke-width="2.400"/>
<path d="M543.500 868v16M556.500 868v16M543 869h14M543 883h14" stroke="#222" stroke-width="1.200" fill="none"/><rect x="544" y="879" width="12" height="3" fill="#aab"/><rect x="560.500" y="868" width="1" height="5" fill="#222"/><circle cx="561" cy="875" r="1.500" fill="#222"/><rect x="560.500" y="878" width="1" height="6" fill="#222"/>
<path d="M602 874c1-6 6-9 11-9 7 0 12 5 12 12h-16c0 5 7 7 14 3v5c-8 3-19 1-19-8 0-2 .5-3 1-3zM608 873h10c0-5-9-5-10 0z" fill="#0c77d8" fill-rule="evenodd"/>
<path d="M658 866h11l2 3h13v20h-26z" fill="#f7c94b"/><path d="M658 866h11l2 3h-13z" fill="#d9981e"/><path d="M667 889v-6a2 2 0 0 1 2-2h6a2 2 0 0 1 2 2v6h7v-3h-26v3z" fill="#1a85d6"/>
<rect x="648" y="897" width="47" height="3" fill="#0078d7"/><rect x="686" y="897" width="9" height="3" fill="#6cb0e4"/>
<rect x="701" y="853" width="58" height="47" fill="#e9f2f7"/>
<rect x="701" y="897" width="58" height="3" fill="#0078d7"/>
<path d="M722 864l17 8v13l-12 7.500-5-3 12-6.500v-8.500l-12-6z" fill="url(#gold)"/><path d="M722 876l8-3v8l-8 3.500z" fill="url(#gold)"/>
<path d="M1351 880l6-5.500 6 5.500" fill="none" stroke="#222" stroke-width="1.200"/>
<rect x="1380" y="872" width="14" height="9" fill="#111"/><rect x="1394" y="875" width="2" height="3" fill="#111"/><path d="M1377 872v-4M1380 872v-4" stroke="#111"/><rect x="1376" y="872" width="5" height="3" fill="#111"/><path d="M1378.500 875v7" stroke="#111"/>
<path d="M1412 870h15v12h-15zM1419.500 882v3M1415 885.500h10" fill="none" stroke="#222" stroke-width="1.200"/><rect x="1405.500" y="870" width="7" height="6" fill="#d2e0ec" stroke="#222"/><path d="M1409 876v8" stroke="#222"/>
<path d="M1434 874h3l5-4v14l-5-4h-3z" fill="none" stroke="#222" stroke-width="1.200"/><path d="M1445 874q2 3 0 6" fill="none" stroke="#222"/><path d="M1448 871q4 6 0 12M1451 869q5 8 0 16" fill="none" stroke="#999"/>
<text x="1473" y="871" textLength="49" lengthAdjust="spacingAndGlyphs" style="font-size:15px;fill:#333">1:30 PM</text>
<text x="1466" y="893" textLength="63" lengthAdjust="spacingAndGlyphs" style="font-size:15px;fill:#333">5/14/2020</text>
<path d="M1552 867h19v14h-8l-3 3v-3h-8z" fill="#111"/><path d="M1555 871h13M1555 874h13M1555 877h9" stroke="#d6e0ec"/>
<circle cx="1569" cy="885" r="9" fill="#d0d0d0" stroke="#8a8a8a" stroke-width="1.500"/>
<text x="1569" y="890" text-anchor="middle" style="font-size:13px;fill:#222">2</text>
</svg>
</body></html>
